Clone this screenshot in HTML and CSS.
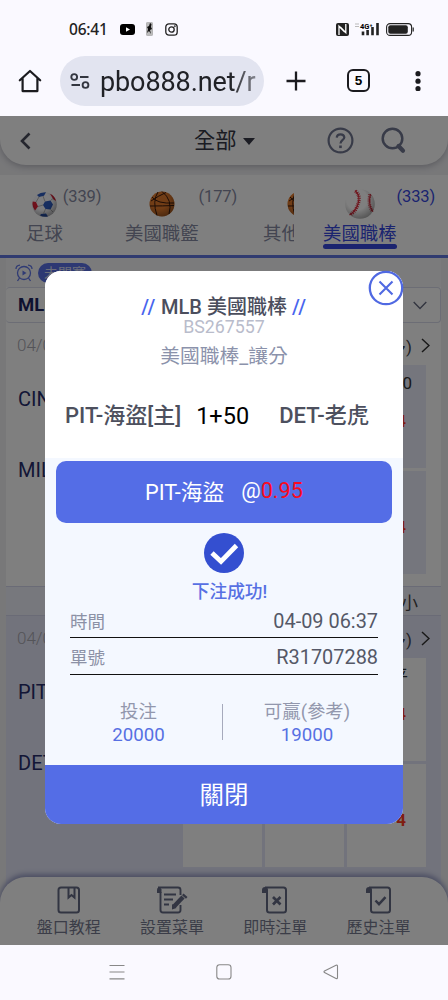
FILE: index.html
```html
<!DOCTYPE html>
<html lang="zh-Hant">
<head>
<meta charset="utf-8">
<title>美國職棒</title>
<link rel="stylesheet" href="styles.css">
</head>
<body>
<svg width="0" height="0" class="defs">
  <defs>
    <radialGradient id="shade" cx=".4" cy=".35" r=".7"><stop offset=".5" stop-color="#000" stop-opacity="0"/><stop offset="1" stop-color="#000" stop-opacity=".35"/></radialGradient>
    <symbol id="basketball" viewBox="0 0 26 26">
      <circle cx="13" cy="13" r="12.5" fill="#e27a2c"/>
      <path d="M3 6Q8 13 25 12M1 15Q14 15 25 14.500M2 10Q9 5 17 1.500M9 1Q3 10 8 24.500M13 .5Q24 9 20 23" fill="none" stroke="#3a1a0c" stroke-width="1"/>
      <circle cx="13" cy="13" r="12.500" fill="url(#shade)"/>
    </symbol>
  </defs>
</svg>
<div class="statusbar">
  <span class="clock">06:41</span>
  <svg class="yt" width="15" height="11" viewBox="0 0 15 11"><rect width="15" height="11" rx="3" fill="#000"/><path d="M6 3.200v4.600l4-2.300z" fill="#fff"/></svg>
  <svg class="nba" width="7" height="14" viewBox="0 0 7 14"><rect x=".4" y=".4" width="6.200" height="13.200" rx="1" fill="#bbb" stroke="#999" stroke-width=".6"/><path d="M4 1l1.500 1-.5 3 1 2-2 1 1 4-2-3-2 2 1-4-1-2 2-1z" fill="#111"/></svg>
  <svg class="ig" width="13" height="13" viewBox="0 0 13 13" fill="none" stroke="#222" stroke-width="1.300"><rect x=".8" y=".8" width="11.400" height="11.400" rx="3.200"/><circle cx="6.500" cy="6.500" r="2.700"/><circle cx="9.800" cy="3.200" r=".3"/></svg>
  <span class="grow"></span>
  <svg width="13" height="13" viewBox="0 0 13 13"><path d="M2 0h9q2 0 2 2v9q0 2-2 2H2q-2 0-2-2V2q0-2 2-2z" fill="#222"/><path d="M3 12V3.200L8.700 9M9.800 1v8.600L4.300 4" fill="none" stroke="#fff" stroke-width="1.300"/></svg>
  <svg class="signal" width="25" height="14" viewBox="0 0 25 14"><path d="M0 2h4M0 4.500h4" stroke="#bbb"/><text x="5" y="6.500" class="g4">4G⁺</text><path d="M8 13.300V9.500M12.600 13.300V8M17.500 13.300V5M22.500 13.300V1" stroke="#222" stroke-width="2.600"/></svg>
  <svg width="28" height="13" viewBox="0 0 28 13"><rect x=".6" y=".6" width="25" height="11.800" rx="3.500" fill="none" stroke="#222" stroke-width="1.100"/><rect x="2.300" y="2.300" width="19.500" height="8.400" rx="2" fill="#222"/><path d="M27.200 4.500v4" stroke="#222" stroke-width="1.200"/></svg>
</div>
<div class="browser">
  <svg class="home" width="24" height="24" viewBox="0 0 24 24" fill="none" stroke="#1b1b1f" stroke-width="2.200" stroke-linejoin="round" stroke-linecap="round"><path d="M1.800 11.300L12 2l10.200 9.300M4.600 9.500v12.600h14.800V9.500"/></svg>
  <div class="url">
    <svg width="20" height="18" viewBox="0 0 20 18" fill="none" stroke="#333640" stroke-width="1.900"><circle cx="4.200" cy="5" r="2.900"/><circle cx="15.500" cy="13" r="2.900"/><path d="M10 5h8.500M1.500 13H10"/></svg>
    <span>pbo888.net/r</span>
  </div>
  <svg class="plus" width="20" height="20" viewBox="0 0 20 20"><path d="M10 .5v19M.5 10h19" stroke="#1b1b1f" stroke-width="2.300"/></svg>
  <div class="count">5</div>
  <svg class="dots" width="6" height="20" viewBox="0 0 6 20" fill="#1b1b1f"><circle cx="3" cy="2.700" r="2.600"/><circle cx="3" cy="10.200" r="2.600"/><circle cx="3" cy="17.700" r="2.600"/></svg>
</div>

<main class="page">
  <div class="headwrap">
    <header class="head">
      <svg class="back" width="11" height="18" viewBox="0 0 11 18"><path d="M9.500 1.500L2 9l7.500 7.500" fill="none" stroke="#4a4c5c" stroke-width="2.600"/></svg>
      <div class="filter">全部<i class="caret"></i></div>
      <svg class="help" width="27" height="27" viewBox="0 0 27 27" fill="none" stroke="#707690" stroke-width="2.200"><circle cx="13.500" cy="13.500" r="11.900"/><path d="M9.700 10.700Q10 7.300 13.500 7.300T17.300 10.400C17.300 12.800 13.500 12.900 13.500 16.400"/><path d="M13.500 18.500v2.600" stroke-width="2.600"/></svg>
      <svg class="search" width="25" height="27" viewBox="0 0 25 27" fill="none" stroke="#707690"><circle cx="11.500" cy="11.500" r="9.800" stroke-width="2.500"/><path d="M17.500 19l4.500 4.800" stroke-width="4.200" stroke-linecap="round"/></svg>
    </header>
  </div>
  <nav class="tabs">
    <div class="tab"><div class="sport">
      <div class="ball"><svg width="25" height="25" viewBox="0 0 25 25"><circle cx="12.500" cy="12.500" r="12.300" fill="#f8f8fc"/><path d="M13 9.500l5.500-1 2.500 4-2.500 5-5-.5-2.500-4zM5 3q3.500-3 9-2.800L12 3.800 7 5zM9 22l5-.5 2 3q-4 1-8-1z" fill="#2f5cc0"/><path d="M.8 9.500l3.200.5 2 4.500-3 4Q-.5 14 .8 9.500zM18 1.700Q23 4 24 9l-2.500-1.500z" fill="#e02338"/><path d="M11 13l-5 1.500M13 9.500L11 4M13.500 17l-2 4.500M18.500 8.500l2.500-2M7 5l-3 5M18.500 17.500l2.500 2.500" stroke="#999" stroke-width=".7"/><circle cx="12.500" cy="12.500" r="12.300" fill="url(#shade)"/></svg></div>
      <span>足球</span></div><em>(339)</em></div>
    <div class="tab"><div class="sport"><div class="ball"><svg width="26" height="26"><use href="#basketball"/></svg></div><span>美國職籃</span></div><em>(177)</em></div>
    <div class="tab cut"><div class="sport"><div class="ball"><svg width="26" height="26"><use href="#basketball"/></svg></div><span>其他</span></div></div>
    <div class="tab active"><div class="sport">
      <div class="ball"><svg width="30" height="30" viewBox="0 0 30 30"><circle cx="15" cy="15" r="14.800" fill="#fff"/><g fill="none" stroke="#e03040"><path d="M10 1.500Q16 7 13 15Q11 22 4.500 26" stroke-width="1.200"/><path d="M10.500 2Q16 7 13 15Q11 22 5 26" stroke-width="3.600" stroke-dasharray=".9 1.100"/><path d="M25.500 5Q22.500 15 28 23" stroke-width="1"/><path d="M25 5.500Q22.500 15 27.500 22.500" stroke-width="3.200" stroke-dasharray=".9 1.100"/></g><circle cx="15" cy="15" r="14.800" fill="url(#shade)"/></svg></div>
      <span>美國職棒</span></div><em>(333)</em></div>
  </nav>
  <section class="board">
    <div class="state">
      <svg width="18" height="18" viewBox="0 0 18 18" fill="none" stroke="#6076e8" stroke-width="1.300"><circle cx="9" cy="9" r="6.500"/><path d="M7.500 6.500v5l4-2.500z" fill="#6076e8" stroke="none"/><path d="M1 5Q1 1.500 5 1.200M17 5q0-3.500-4-3.800M4.500 14l-2 3M13.500 14l2 3"/></svg>
      <span class="pill">未開賽</span>
    </div>
    <div class="league"><b>MLB</b><svg width="14" height="9" viewBox="0 0 14 9"><path d="M.7 1L7 7.500 13.300 1" fill="none" stroke="#666b80" stroke-width="1.400"/></svg></div>
    <div class="game">
      <div class="meta"><span>04/09</span><span class="more">多)<svg width="9" height="15" viewBox="0 0 9 15"><path d="M1 1l7 6.500L1 14" fill="none" stroke="#333" stroke-width="1.500"/></svg></span></div>
      <div class="match">
        <div class="teams"><span>CIN</span><span>MIL</span></div>
        <div class="odds">
          <div></div><div></div><div><span>0</span><b>4</b></div>
          <div></div><div></div><div><span></span><b>4</b></div>
        </div>
      </div>
    </div>
    <div class="kinds">小</div>
    <div class="game mine">
      <div class="meta"><span>04/09</span><span class="more">多)<svg width="9" height="15" viewBox="0 0 9 15"><path d="M1 1l7 6.500L1 14" fill="none" stroke="#333" stroke-width="1.500"/></svg></span></div>
      <div class="match">
        <div class="teams"><span>PIT</span><span>DET</span></div>
        <div class="odds">
          <div></div><div></div><div><span class="ping">平</span><b>4</b></div>
          <div></div><div></div><div><span></span><b>4</b></div>
        </div>
      </div>
    </div>
  </section>
  <footer class="foot">
    <div><svg width="24" height="28" viewBox="0 0 24 28" fill="none" stroke="#646a85" stroke-width="2"><rect x="1.500" y="1.500" width="20.500" height="25" rx="2.500"/><path d="M11.500 2v9.500l3-2.500 3 2.500V2"/></svg>盤口教程</div>
    <div><svg width="32" height="28" viewBox="0 0 32 28" fill="none" stroke="#646a85" stroke-width="1.900"><path d="M4.500 6V24q0 2.500 2.500 2.500H22q2.500 0 2.500-2.500v-5M2 1.500H22q2.500 0 2.500 2.500v5M8 8.500h12M8 13.500h9M8 18.500h5"/><path d="M1 7V3.500Q1 1.500 3 1.500t2.500 2V7z" fill="#646a85" stroke="none"/><path d="M18 20.500L27 11" stroke-width="4.400"/><path d="M16 18l4.500 4-4.500 1.500zM27.500 7.500l4 3.500-1.500 1.700-4-3.500z" fill="#646a85" stroke="none"/></svg>設置菜單</div>
    <div><svg width="26" height="28" viewBox="0 0 26 28" fill="none" stroke="#646a85" stroke-width="2"><path d="M5 6v18q0 2.500 2.500 2.500h14q2.500 0 2.500-2.500V4q0-2.500-2.500-2.500H3"/><path d="M0 7V4q0-3 3-3t3 3v3z" fill="#646a85" stroke="none"/><path d="M11 11l7.500 7.500M18.500 11l-7.500 7.500" stroke-width="2.700"/></svg>即時注單</div>
    <div><svg width="26" height="28" viewBox="0 0 26 28" fill="none" stroke="#646a85" stroke-width="2"><path d="M5 6v18q0 2.500 2.500 2.500h14q2.500 0 2.500-2.500V4q0-2.500-2.500-2.500H3"/><path d="M0 7V4q0-3 3-3t3 3v3z" fill="#646a85" stroke="none"/><path d="M9.500 14.500l3.500 3.700 6.500-7" stroke-width="2.500"/></svg>歷史注單</div>
  </footer>

  <div class="overlay">
    <div class="modal">
      <svg class="close" width="36" height="36" viewBox="0 0 36 36" fill="none" stroke="#5069e2"><circle cx="18" cy="18" r="16.200" fill="#fff" stroke-width="2.300"/><path d="M11.500 11.500l13 13M24.500 11.500l-13 13" stroke-width="2.100"/></svg>
      <div class="top">
        <div class="title"><i>//</i> MLB 美國職棒 <i>//</i></div>
        <div class="code">BS267557</div>
        <div class="kind">美國職棒_讓分</div>
        <div class="versus"><b>PIT-海盜[主]</b><span>1+50</span><b>DET-老虎</b></div>
      </div>
      <div class="pick"><span>PIT-海盜</span><span>@<i>0.95</i></span></div>
      <svg class="ok" width="40" height="40" viewBox="0 0 40 40"><circle cx="20" cy="20" r="20" fill="#344fd0"/><path d="M8 20l9 8.500L32.500 12.500" fill="none" stroke="#fff" stroke-width="4.800"/></svg>
      <div class="done">下注成功!</div>
      <div class="row"><span>時間</span><span>04-09 06:37</span></div>
      <div class="row"><span>單號</span><span>R31707288</span></div>
      <div class="sums"><div>投注<b>20000</b></div><hr><div>可贏(參考)<b>19000</b></div></div>
      <div class="shut">關閉</div>
    </div>
  </div>
</main>

<div class="sysnav">
  <svg width="16" height="16" viewBox="0 0 16 16"><path d="M.5 1.500h15M.5 8h15M.5 14.800h15" stroke="#888" stroke-width="1.200"/></svg>
  <svg width="16" height="16" viewBox="0 0 16 16"><rect x=".8" y=".8" width="14.200" height="14.200" rx="2.800" fill="none" stroke="#888" stroke-width="1.100"/></svg>
  <svg width="16" height="16" viewBox="0 0 16 16"><path d="M1.500 7Q.5 7.800 1.500 8.600L13 14.500q1.500.5 1.500-1V2.200q0-1.500-1.500-.9z" fill="none" stroke="#888" stroke-width="1.100"/></svg>
</div>
</body>
</html>
```
FILE: styles.css
```css
* { box-sizing: border-box; }
body {
  margin: 0;
  width: 448px;
  height: 1000px;
  overflow: hidden;
  display: flex;
  flex-direction: column;
  background: #faf9ff;
  font-family: Roboto, "Noto Sans CJK TC", sans-serif;
}
.defs { position: absolute; }
svg { flex: none; display: block; }
i, em { font-style: normal; }

.statusbar {
  height: 46px;
  padding: 12px 34px 0 69px;
  display: flex;
  align-items: center;
  flex: none;
}
.clock { font: 500 15.5px/20px "Noto Sans", sans-serif; width: 39px; color: #222; letter-spacing: -.2px; }
.yt { margin-left: 12px; }
.nba { margin-left: 11px; }
.ig { margin-left: 12px; }
.grow { flex: 1; }
.signal { margin: 0 6px; }
.g4 { font: 700 7.5px Roboto, sans-serif; }

.browser { height: 70px; flex: none; display: flex; align-items: center; padding: 0 0 1px 18px; }
.url {
  width: 204px;
  height: 50px;
  margin-left: 18px;
  padding-left: 10px;
  border-radius: 25px;
  background: #e2e4f0;
  display: flex;
  align-items: center;
  gap: 10px;
  font-size: 27px;
  color: #202126;
  letter-spacing: -.1px;
  white-space: nowrap;
}
.url span {
  width: 156px;
  overflow: hidden;
  padding-top: 2px;
  -webkit-mask-image: linear-gradient(90deg, #000 130px, rgba(0, 0, 0, .5) 155px);
  mask-image: linear-gradient(90deg, #000 130px, rgba(0, 0, 0, .5) 155px);
}
.plus { margin-left: 22px; }
.count {
  width: 23px;
  height: 23px;
  margin-left: 41px;
  border: 2.2px solid #1b1b1f;
  border-radius: 6px;
  font: 700 13.5px/19px "Liberation Sans", sans-serif;
  text-align: center;
}
.dots { margin-left: 45px; }

.page {
  height: 829px;
  flex: none;
  position: relative;
  background: #f0f0f2;
  overflow: hidden;
  display: flex;
  flex-direction: column;
}
.headwrap { height: 59px; background: #f0f0f3; flex: none; }
.head {
  height: 49px;
  border-radius: 0 0 26px 26px;
  background: #fff;
  box-shadow: 0 2px 6px #b8b8c0;
  display: flex;
  align-items: center;
  padding: 0 42px 0 20px;
}
.filter {
  margin-left: 163px;
  width: 133px;
  display: flex;
  align-items: center;
  gap: 6px;
  padding-top: 1px;
  color: #363846;
  font-size: 21.3px;
  line-height: 30px;
}
.caret { border: 6px solid transparent; border-top: 7px solid #363846; border-bottom: 0; }
.search { margin-left: auto; }

.tabs {
  height: 83px;
  flex: none;
  padding-left: 26px;
  background: #fff;
  border-bottom: 3px solid #6076e0;
  display: grid;
  grid-template-columns: 99px 138px 60px 113px;
}
.tab { display: flex; color: #868aa2; }
.tab.cut { width: 31px; overflow: hidden; }
.cut .sport { width: 74px; }
.sport { display: flex; flex-direction: column; align-items: center; font-size: 18.4px; white-space: nowrap; flex: none; }
.ball { height: 30px; margin-top: 14px; display: flex; align-items: center; }
.cut .sport span { align-self: flex-start; }
.sport::after { content: ""; width: 100%; height: 5px; margin-top: -1px; border-radius: 3px; }
.active .sport::after { background: #3749df; }
.tab em { font-size: 16.5px; line-height: 20px; margin-top: 12px; letter-spacing: -.15px; }
.active { color: #3749df; }

.board { flex: none; width: 435px; margin-left: 6px; background: #fff; }
.state { height: 29px; padding-left: 9px; display: flex; align-items: center; gap: 5px; background: #f6f6f8; }
.pill {
  width: 54px;
  height: 20px;
  border-radius: 10px;
  background: #5a70e6;
  color: #d8dcf4;
  font-size: 14px;
  line-height: 20px;
  text-align: center;
}
.league {
  height: 36px;
  border: 1px solid #d8daea;
  border-left: 0;
  border-radius: 4px;
  padding: 0 13px 0 12px;
  display: flex;
  align-items: center;
  justify-content: space-between;
  color: #1c2460;
  font-size: 18.5px;
}
.game { height: 263px; }
.meta {
  height: 42px;
  padding: 2px 11px 0 11px;
  display: flex;
  align-items: center;
  justify-content: space-between;
  font-size: 17px;
  color: #a8a8b0;
  font-weight: 300;
}
.more { display: flex; gap: 9px; align-items: center; color: #44444c; font-weight: 400; }
.match { display: flex; padding-left: 12px; }
.teams { width: 165px; flex: none; display: flex; flex-direction: column; font-size: 20px; color: #262c6c; padding-top: 19px; }
.teams span { height: 71px; line-height: 30px; }
.odds { display: grid; grid-template-columns: 79px 79px 79px; grid-auto-rows: 103px; gap: 3px; }
.odds > div {
  background: #ebedfa;
  display: flex;
  flex-direction: column;
  align-items: flex-end;
  padding: 7px 14px 0 0;
  font-size: 17px;
  color: #333;
}
.odds span { height: 22px; line-height: 22px; }
.odds b { color: #ff3b20; margin: 17px 6px 0 0; line-height: 20px; }
.kinds {
  height: 30px;
  border: solid #d4d6ec;
  border-width: 1px 0;
  background: #eff0fa;
  padding-right: 23px;
  text-align: right;
  font-size: 17px;
  line-height: 33px;
  color: #444;
}
.mine { background: #e4e6f8; height: 270px; }
.mine .odds > div { background: #fff; }
.mine .odds span.ping { margin-right: 4px; }

.foot {
  position: absolute;
  left: 0;
  right: 0;
  bottom: 0;
  height: 68px;
  border-radius: 26px 26px 0 0;
  background: #fff;
  box-shadow: 0 -2px 5px 1px #9ba0c8;
  padding: 9px 20px 0 17px;
  display: grid;
  grid-template-columns: repeat(4, 103.3px);
  font-size: 16px;
  line-height: 24px;
  color: #777b90;
}
.foot div { display: flex; flex-direction: column; align-items: center; gap: 2px; }

.overlay { position: absolute; inset: 0; background: rgba(0, 0, 0, .5); padding: 155px 45px 0; }
.modal {
  position: relative;
  width: 358px;
  height: 553px;
  border-radius: 16px;
  background: #f4f8ff;
  overflow: hidden;
  display: flex;
  flex-direction: column;
  align-items: center;
}
.modal { overflow: visible; }
.close { position: absolute; right: -1px; top: -1px; }
.top {
  width: 100%;
  height: 187px;
  flex: none;
  border-radius: 16px 16px 0 0;
  background: #fff;
  padding-top: 24px;
  text-align: center;
}
.title { font-size: 20px; font-weight: 500; line-height: 24px; height: 22px; color: #4b4e5d; white-space: pre; }
.title i { color: #4865ee; letter-spacing: .8px; }
.code { font-size: 17.8px; line-height: 20px; color: #b9bccb; }
.kind { font-size: 19.8px; line-height: 24px; height: 24px; margin-top: 8px; color: #8b92ab; }
.versus { display: flex; margin-top: 31px; padding-left: 20px; font-size: 22px; line-height: 32px; height: 32px; color: #4d505e; white-space: nowrap; }
.versus b { font-weight: 500; }
.versus span { width: 83px; margin-left: 15px; color: #000; text-align: left; font-size: 23.5px; }
.versus b:last-child { letter-spacing: .1px; }
.pick {
  width: 336px;
  height: 62px;
  flex: none;
  margin-top: 3px;
  padding-bottom: 3px;
  border-radius: 10px;
  background: #546de6;
  color: #fff;
  display: flex;
  justify-content: center;
  align-items: center;
  gap: 17px;
  font-size: 21.7px;
}
.pick i { color: #fa0a20; }
.ok { margin-top: 10px; }
.done { height: 30px; margin: 4px 0 0 11px; line-height: 31px; font-size: 17.7px; font-weight: 500; color: #5770e3; }
.row {
  width: 308px;
  height: 37px;
  flex: none;
  padding-top: 4px;
  border-bottom: 1.5px solid #111;
  display: flex;
  justify-content: space-between;
  align-items: center;
  color: #555867;
  font-size: 19.9px;
  line-height: 30px;
}
.done + .row { height: 31px; padding-top: 0; }
.row span:first-child { font-size: 17.5px; color: #8c91a6; }
.sums {
  width: 358px;
  height: 90px;
  flex: none;
  padding-top: 25px;
  display: flex;
  font-size: 18.4px;
  line-height: 24px;
  color: #9297ad;
}
.sums div { width: 169px; padding-left: 18px; text-align: center; }
.sums div:last-child { width: 168px; padding-left: 0; }
.sums b { display: block; font-weight: 400; color: #5770e3; font-size: 18.7px; line-height: 23px; }
.sums hr { width: 1px; height: 36px; border: 0; margin: 4px 0 0 8px; background: #a6aabc; }
.shut {
  width: 100%;
  height: 59px;
  flex: none;
  border-radius: 0 0 16px 16px;
  background: #546de6;
  color: #fff;
  font-size: 24.5px;
  line-height: 61px;
  text-align: center;
}
.sysnav { flex: 1; display: flex; justify-content: center; gap: 91px; padding-top: 19px; }
```
